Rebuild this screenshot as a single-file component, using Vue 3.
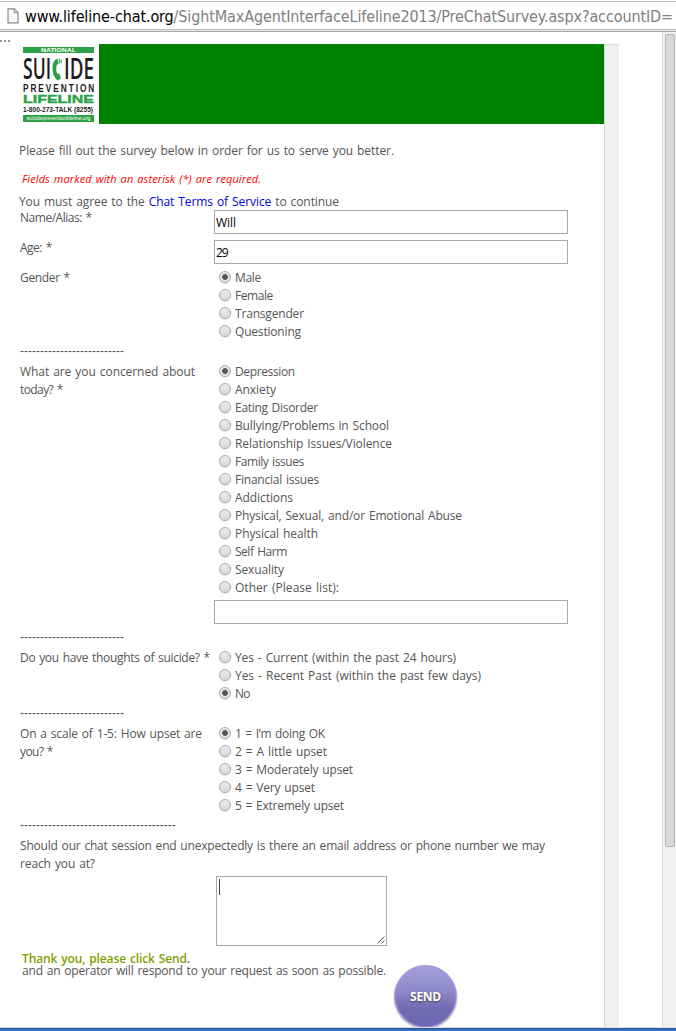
<script setup>
import { ref } from 'vue'

// Tracks a line of text out (or in) so that it fills the given width.
const vFit = {
  mounted(el, { value }) {
    const count = el.textContent.length
    el.style.letterSpacing = (value - el.getBoundingClientRect().width) / (count - 0.5) + 'px'
  },
}

const alias = ref('Will')
const age = ref('29')
const other = ref('')
const contact = ref('')

const sections = [
  {
    id: 'gender',
    question: [['Gender *', 50]],
    options: [['Male', 26], ['Female', 38], ['Transgender', 69], ['Questioning', 66]],
    rule: 26,
  },
  {
    id: 'concern',
    question: [['What are you concerned about', 175], ['today? *', 43]],
    options: [
      ['Depression', 60], ['Anxiety', 41], ['Eating Disorder', 83],
      ['Bullying/Problems in School', 154], ['Relationship Issues/Violence', 157],
      ['Family issues', 69], ['Financial issues', 84], ['Addictions', 58],
      ['Physical, Sexual, and/or Emotional Abuse', 227], ['Physical health', 83],
      ['Self Harm', 52], ['Sexuality', 49], ['Other (Please list):', 104],
    ],
    other: true,
    rule: 26,
  },
  {
    id: 'thoughts',
    question: [['Do you have thoughts of suicide? *', 190]],
    options: [
      ['Yes - Current (within the past 24 hours)', 221],
      ['Yes - Recent Past (within the past few days)', 246],
      ['No', 15],
    ],
    rule: 26,
  },
  {
    id: 'scale',
    question: [['On a scale of 1-5: How upset are', 182], ['you? *', 33]],
    options: [
      ['1 = I’m doing OK', 90], ['2 = A little upset', 92], ['3 = Moderately upset', 118],
      ['4 = Very upset', 80], ['5 = Extremely upset', 109],
    ],
    rule: 39,
  },
]

const picked = ref({ gender: 0, concern: 0, thoughts: 2, scale: 0 })
</script>

<template>
  <div class="window">
    <div class="urlbar">
      <svg class="doc" width="12" height="16" viewBox="0 0 12 16">
        <path d="M1 .8H7.5L11 4.5V14.8H1Z" fill="#fafafa" stroke="#8a8a8a" stroke-width="1.2" />
        <path d="M7.2 1V4.8H11" fill="#ddd" stroke="#8a8a8a" />
      </svg>
      <span v-fit="648" class="url"><b>www.lifeline-chat.org</b>/SightMaxAgentInterfaceLifeline2013/PreChatSurvey.aspx?accountID=</span>
    </div>

    <div class="viewport">
      <div class="dots"><i></i><i></i><i></i></div>
      <main class="page">
        <header class="head">
          <svg class="logo" width="80" height="80" viewBox="0 0 80 80">
            <rect x="4" y="3" width="71" height="6" fill="#2ba245" />
            <text x="22" y="8" class="mark white" font-size="5.5" textLength="35" lengthAdjust="spacingAndGlyphs">NATIONAL</text>
            <text x="4" y="35" class="mark big" font-size="29" textLength="28" lengthAdjust="spacingAndGlyphs">SUI</text>
            <text x="45" y="35" class="mark big" font-size="29" textLength="30" lengthAdjust="spacingAndGlyphs">IDE</text>
            <path d="M38.500 14.500C34.500 16 33.500 20 33.500 24.500C33.500 30 35.500 34 38.500 36.500L42 34.500L40.200 29.500L38 29.500C37 27 37 23 38 20.500L39.500 20Z" fill="#2ba245" />
            <path d="M40.300 19.500V14.500M42.200 19V15.500" stroke="#2ba245" stroke-width="1" fill="none" />
            <g transform="translate(4 47.500) scale(.72 1)">
              <text x="0" y="0" class="mark" font-size="11.500" textLength="99">PREVENTION</text>
            </g>
            <text x="4" y="58.800" class="mark heavy" font-size="11.500" textLength="71" lengthAdjust="spacingAndGlyphs">LIFELINE</text>
            <text x="4" y="68" class="mark" font-size="7" textLength="70" lengthAdjust="spacingAndGlyphs">1-800-273-TALK (8255)</text>
            <rect x="4" y="71" width="71" height="7" fill="#2ba245" />
            <text x="7.500" y="76.200" class="mark white site" font-size="5.600" textLength="64" lengthAdjust="spacingAndGlyphs">suicidepreventionlifeline.org</text>
          </svg>
          <div class="banner"></div>
        </header>

        <p class="intro"><span v-fit="375">Please fill out the survey below in order for us to serve you better.</span></p>
        <p class="required"><span v-fit="239">Fields marked with an asterisk (*) are required.</span></p>
        <p class="terms"><span v-fit="320">You must agree to the <a>Chat Terms of Service</a> to continue</span></p>

        <div class="row field">
          <label><span v-fit="72">Name/Alias: *</span></label>
          <div class="box"><span v-fit="20">{{ alias }}</span></div>
        </div>
        <div class="row field">
          <label><span v-fit="32">Age: *</span></label>
          <div class="box"><span v-fit="12">{{ age }}</span></div>
        </div>

        <template v-for="s in sections" :key="s.id">
          <div class="row">
            <div class="question">
              <div v-for="q in s.question" :key="q[0]"><span v-fit="q[1]">{{ q[0] }}</span></div>
            </div>
            <div>
              <div
                v-for="(o, i) in s.options" :key="o[0]" class="option"
                @click="picked[s.id] = i"
              >
                <span class="radio" :class="{ on: picked[s.id] === i }"></span>
                <span v-fit="o[1]">{{ o[0] }}</span>
              </div>
              <div v-if="s.other" class="box extra">{{ other }}</div>
            </div>
          </div>
          <div class="rule">{{ '-'.repeat(s.rule) }}</div>
        </template>

        <div class="question wide">
          <div><span v-fit="525">Should our chat session end unexpectedly is there an email address or phone number we may</span></div>
          <div><span v-fit="75">reach you at?</span></div>
        </div>
        <div class="area">
          <span class="caret"></span>{{ contact }}
          <svg class="grip" width="8" height="8" viewBox="0 0 8 8">
            <path d="M.5 7.500L7.500 .5M4.500 7.500L7.500 4.500" stroke="#555" fill="none" />
          </svg>
        </div>

        <footer class="foot">
          <div class="closing">
            <div class="thanks"><span v-fit="168">Thank you, please click Send<em>.</em></span></div>
            <div><span v-fit="364">and an operator will respond to your request as soon as possible.</span></div>
          </div>
          <button class="send"><span v-fit="31">SEND</span></button>
        </footer>
      </main>
      <div class="gutter"></div>
      <div class="scroll"><div class="thumb"></div></div>
    </div>
    <div class="edge"></div>
  </div>
</template>

<style>
body { margin: 0; background: #fff; }
</style>

<style scoped>
.window {
  width: 676px; height: 1031px; overflow: hidden; display: flex; flex-direction: column;
  background: #fff; color: #555; font: 12px/18px "Open Sans", "Noto Sans", sans-serif;
}
span { white-space: nowrap; }
p { margin: 0; }
.urlbar {
  box-sizing: border-box; flex: none; height: 32px; padding: 0 0 0 7px;
  display: flex; align-items: center; gap: 6px;
  border-top: 1px solid #fff; border-bottom: 1px solid #a8a8a8;
  box-shadow: inset 0 1px #bdbdbd, inset 0 -1px #dfe4e8, inset 0 -2px #b4bfc8;
}
.doc { flex: none; }
.url { padding-top: 1px; font: 16px/22px "DejaVu Sans Condensed", "Noto Sans", sans-serif; color: #808080; }
.url b { font-weight: normal; color: #000; }
.viewport { flex: 1; min-height: 0; display: flex; position: relative; }
.dots { position: absolute; left: 0; top: 8px; display: flex; gap: 2px; }
.dots i { width: 2px; height: 2px; background: #a08c84; }
.page { width: 604px; padding-top: 12px; box-sizing: border-box; flex: none; word-spacing: 1px; }
.head { display: flex; height: 80px; padding-left: 19px; word-spacing: 0; }
.logo { flex: none; }
.mark { font-family: "Liberation Sans", sans-serif; font-weight: bold; fill: #1c1c1c; }
.mark.big { font-family: "Open Sans", sans-serif; font-weight: 600; }
.mark.heavy { fill: #2ba245; stroke: #2ba245; stroke-width: .4px; }
.mark.white { fill: #fff; }
.mark.site { font-weight: normal; }
.banner { flex: 1; background: #008000; }
.intro { padding: 18px 0 0 19px; }
.required { padding: 10px 0 0 22px; color: #f00; font-style: italic; font-size: 11px; }
.terms { height: 18px; padding: 4px 0 0 19px; line-height: 20px; }
.terms a { color: #0000e0; }
.row { display: grid; grid-template-columns: 194px 1fr; padding-left: 20px; }
.field { height: 30px; line-height: 16px; }
.field:has(+ .row:not(.field)) { height: 28px; }
.box {
  box-sizing: border-box; width: 354px; height: 24px; padding-left: 1px;
  border: 1px solid #a9a9a9; color: #000; line-height: 23px;
}
.extra { margin-top: 4px; margin-bottom: 2px; }
.question div { height: 18px; line-height: 20px; }
.option { display: flex; height: 18px; line-height: 20px; padding-left: 5px; gap: 4px; }
.radio {
  box-sizing: border-box; width: 12px; height: 12px; margin-top: 3px;
  border: 1px solid #aaa; border-radius: 50%;
  background: linear-gradient(#ececec, #dadada); box-shadow: 0 1px 1px #e2e2e2;
}
.radio.on { background: radial-gradient(circle, #5a5a5a 0 2.5px, #e4e4e4 3.3px); }
.rule { margin: 2px 0 2px 20px; height: 18px; font: 12px/18px "Liberation Sans", sans-serif; }
.wide { padding-left: 20px; }
.area {
  position: relative; box-sizing: border-box; width: 171px; height: 70px;
  margin: 4px 0 0 216px; border: 1px solid #a9a9a9;
}
.caret { position: absolute; left: 2px; top: 2px; width: 1px; height: 16px; background: #444; }
.grip { position: absolute; right: 1px; bottom: 1px; }
.foot { display: flex; padding-left: 22px; gap: 8px; }
.closing { width: 364px; padding-top: 7px; line-height: 12px; }
.thanks { color: #80a000; font-weight: 600; }
.thanks em { color: #666; font-style: normal; }
.send {
  flex: none; width: 63px; height: 63px; margin-top: 19px; padding: 0; border: 1px solid #9d97d4;
  border-radius: 50%; background: linear-gradient(#a5a0da, #9089c9 40%, #716ab2 70%, #6c65b2);
  box-shadow: inset 0 0 0 1px #a39edb80, 0 1px 2px #aaa;
  color: #fff; font: bold 12px/18px "Open Sans", sans-serif; text-shadow: 0 1px 2px #444;
}
.gutter {
  box-sizing: border-box; width: 15px; margin-top: 12px; flex: none;
  border-left: 1px solid #d9d9d9; border-top: 1px solid #dcdcdc;
  background: linear-gradient(90deg, #f2f2f2, #efefef);
}
.scroll {
  box-sizing: border-box; width: 14px; margin-left: 43px; flex: none; padding: 2px 1px 0 2px;
  border-left: 1px solid #d9d9d9; background: #f1f1f1;
}
.thumb {
  box-sizing: border-box; width: 10px; height: 813px; background: #d8d8d8;
  border: 1px solid #b5b5b5; border-radius: 2px;
}
.edge {
  flex: none; height: 3px; box-sizing: border-box; background: #3d6dbd;
  border-top: 1px solid #29519a; box-shadow: 0 -1px #dce0e4; z-index: 1;
}
</style>
